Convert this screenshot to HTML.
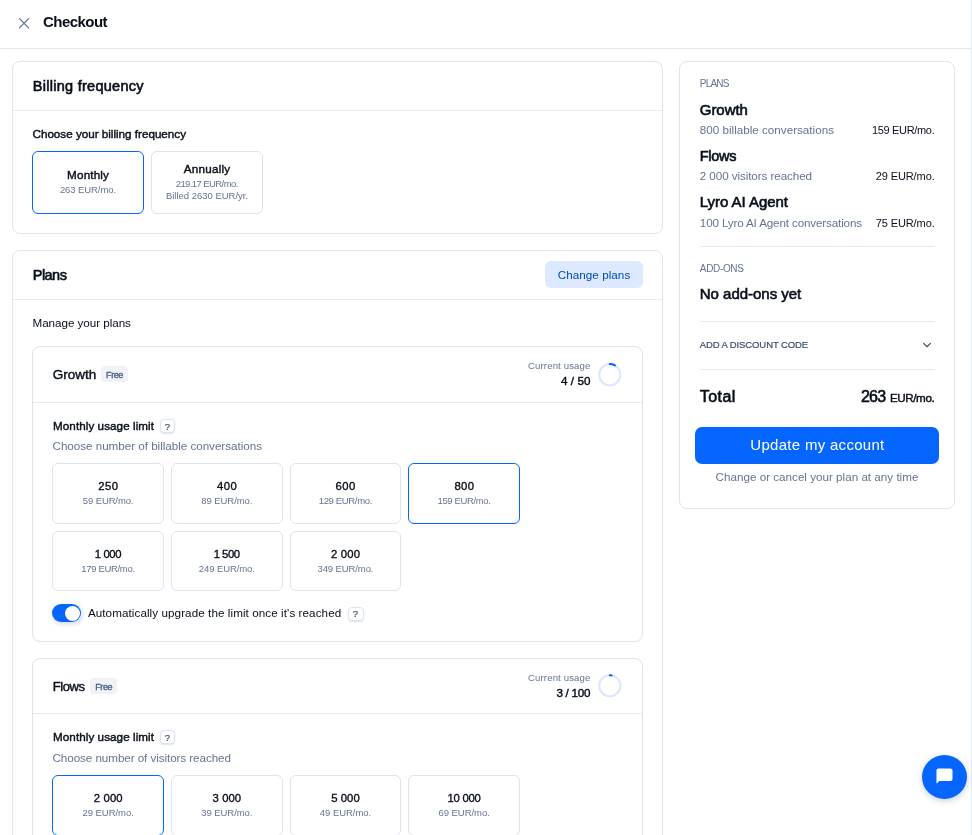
<!DOCTYPE html>
<html lang="en">
<head>
<meta charset="utf-8">
<title>Checkout</title>
<style>
*{box-sizing:border-box;margin:0;padding:0}
html,body{width:972px;height:835px;overflow:hidden;background:#fff}
body{will-change:transform;font-family:"Liberation Sans",sans-serif;color:#080f1a;position:relative}
.a{position:absolute}
.t{position:absolute;white-space:pre;display:block}
.b{font-weight:700}
.m{font-weight:400;-webkit-text-stroke:0.42px currentColor}
.h{font-weight:400;-webkit-text-stroke:0.6px currentColor}
.r{font-weight:400}
.m3{font-weight:400;-webkit-text-stroke:0.35px currentColor}
.m2{font-weight:400;-webkit-text-stroke:0.2px currentColor}
.hdr{position:absolute;left:0;top:0;width:971px;height:49px;border-bottom:1px solid #e2e8ef}
.edge{position:absolute;left:971px;top:0;width:1px;height:835px;background:#e2e8ef}
.card{position:absolute;border:1px solid #dde4ee;border-radius:8px;background:#fff}
.div{position:absolute;height:1px;background:#e6ebf2}
.tile{position:absolute;border:1px solid #dce3ee;border-radius:6px;background:#fff}
.tile.sel{border:1.5px solid #0566ff}
.tag{position:absolute;background:#eff2f6;border-radius:4px}
.q{position:absolute;border:1px solid #dde4ee;border-radius:4px;background:#fff;box-shadow:0 1px 1.5px rgba(0,20,51,.12)}
</style>
</head>
<body>
<div class="hdr"></div><div class="edge"></div>
<svg class="a" style="left:18px;top:16.5px" width="12" height="12" viewBox="0 0 12 12"><path d="M1.5 1.7 L10.6 10.8 M10.6 1.7 L1.5 10.8" stroke="#5b6f94" stroke-width="1.2" fill="none" stroke-linecap="round"/></svg>
<div class="card" style="left:12px;top:61px;width:651px;height:173px"></div>
<div class="div" style="left:13px;width:649px;top:110px"></div>
<div class="tile sel" style="left:32px;top:151px;width:112px;height:63px"></div>
<div class="tile" style="left:151px;top:151px;width:112px;height:63px"></div>
<div class="card" style="left:12px;top:250px;width:651px;height:620px"></div>
<div class="div" style="left:13px;width:649px;top:299px"></div>
<div class="a" style="left:545px;top:261px;width:98px;height:27px;border-radius:6px;background:#dce9ff"></div>
<div class="card" style="left:32px;top:346px;width:611px;height:296px"></div>
<div class="div" style="left:33px;width:609px;top:402px"></div>
<div class="tag" style="left:101.2px;top:366px;width:26.5px;height:16px"></div>
<div class="q" style="left:159.5px;top:418.5px;width:15.5px;height:14.5px"></div>
<svg class="a" style="left:0;top:0" width="972" height="835"><circle cx="609.8" cy="374.7" r="10.6" fill="none" stroke="#dbe7fe" stroke-width="2.1"/><path d="M609.8 364.09999999999997 A10.6 10.6 0 0 1 614.91 365.41" fill="none" stroke="#0566ff" stroke-width="2" stroke-linecap="round"/></svg>
<div class="tile" style="left:52.33px;top:463.00px;width:111.67px;height:60.5px"></div>
<div class="tile" style="left:171.00px;top:463.00px;width:111.67px;height:60.5px"></div>
<div class="tile" style="left:289.67px;top:463.00px;width:111.67px;height:60.5px"></div>
<div class="tile sel" style="left:408.34px;top:463.00px;width:111.67px;height:60.5px"></div>
<div class="tile" style="left:52.33px;top:530.70px;width:111.67px;height:60.5px"></div>
<div class="tile" style="left:171.00px;top:530.70px;width:111.67px;height:60.5px"></div>
<div class="tile" style="left:289.67px;top:530.70px;width:111.67px;height:60.5px"></div>
<div class="card" style="left:32px;top:658px;width:611px;height:296px"></div>
<div class="div" style="left:33px;width:609px;top:713px"></div>
<div class="tag" style="left:90.4px;top:678px;width:26.3px;height:16px"></div>
<div class="q" style="left:159.5px;top:729.5px;width:15.5px;height:14.5px"></div>
<svg class="a" style="left:0;top:0" width="972" height="835"><circle cx="609.8" cy="685.8000000000001" r="10.6" fill="none" stroke="#dbe7fe" stroke-width="2.1"/><path d="M609.8 675.2 A10.6 10.6 0 0 1 611.79 675.39" fill="none" stroke="#0566ff" stroke-width="2" stroke-linecap="round"/></svg>
<div class="tile sel" style="left:52.33px;top:775.00px;width:111.67px;height:60.5px"></div>
<div class="tile" style="left:171.00px;top:775.00px;width:111.67px;height:60.5px"></div>
<div class="tile" style="left:289.67px;top:775.00px;width:111.67px;height:60.5px"></div>
<div class="tile" style="left:408.34px;top:775.00px;width:111.67px;height:60.5px"></div>
<div class="a" style="left:52px;top:604px;width:29px;height:18px;border-radius:9px;background:#0566ff;box-shadow:1px 2px 5px rgba(0,40,120,.18)"><div class="a" style="right:1.5px;top:1.5px;width:15px;height:15px;border-radius:50%;background:#fff"></div></div>
<div class="q" style="left:347.5px;top:607px;width:16px;height:13.5px"></div>
<div class="card" style="left:679px;top:61px;width:276px;height:447.5px"></div>
<div class="div" style="left:699.5px;width:235.5px;top:246px"></div>
<div class="div" style="left:699.5px;width:235.5px;top:321px"></div>
<div class="div" style="left:699.5px;width:235.5px;top:369px"></div>
<svg class="a" style="left:921px;top:340px" width="12" height="10" viewBox="0 0 12 10"><path d="M2.6 3.4 L6 6.7 L9.4 3.4" stroke="#3c4f6e" stroke-width="1.2" fill="none" stroke-linecap="round" stroke-linejoin="round"/></svg>
<div class="a" style="left:695px;top:427px;width:244px;height:37px;border-radius:7px;background:#0566ff"></div>
<div class="a" style="left:922px;top:755px;width:45px;height:44px;border-radius:50%;background:#0566ff;box-shadow:0 2px 6px rgba(0,27,71,.22)"><svg class="a" style="left:13px;top:12px" width="19" height="19" viewBox="0 0 19 19"><path d="M3.5 1.5 H15.5 Q17.5 1.5 17.5 3.5 V12 Q17.5 14 15.5 14 H4.2 L1.5 16.8 V3.5 Q1.5 1.5 3.5 1.5 Z" fill="#fff"/></svg></div>
<header>
<div class="t b" style="top:12.00px;font-size:15px;line-height:20px;color:#080f1a;letter-spacing:-0.549px;left:43.00px;">Checkout</div>
</header>
<main>
<section>

<div class="t h" style="top:77.00px;font-size:14.5px;line-height:19px;color:#080f1a;letter-spacing:0.268px;left:32.80px;">Billing frequency</div>
<div class="t m" style="top:126.00px;font-size:11.67px;line-height:15px;color:#080f1a;letter-spacing:-0.003px;left:32.50px;">Choose your billing frequency</div>
<div class="t m" style="top:167.00px;font-size:11.67px;line-height:15px;color:#080f1a;letter-spacing:0.162px;left:-211.92px;width:600px;text-align:center;">Monthly</div>
<div class="t r" style="top:184.00px;font-size:9.5px;line-height:12px;color:#647491;letter-spacing:-0.083px;left:-212.04px;width:600px;text-align:center;">263 EUR/mo.</div>
<div class="t m" style="top:161.00px;font-size:11.67px;line-height:15px;color:#080f1a;letter-spacing:0.226px;left:-92.89px;width:600px;text-align:center;">Annually</div>
<div class="t r" style="top:178.00px;font-size:9.5px;line-height:12px;color:#647491;letter-spacing:-0.587px;left:-93.29px;width:600px;text-align:center;">219.17 EUR/mo.</div>
<div class="t r" style="top:190.00px;font-size:9.5px;line-height:12px;color:#647491;letter-spacing:-0.015px;left:-93.01px;width:600px;text-align:center;">Billed 2630 EUR/yr.</div>
</section>
<section>
<div class="t h" style="top:266.00px;font-size:14.5px;line-height:19px;color:#080f1a;letter-spacing:-0.545px;left:32.80px;">Plans</div>
<div class="t r" style="top:267.00px;font-size:11.67px;line-height:15px;color:#0049bd;letter-spacing:0.051px;left:294.03px;width:600px;text-align:center;">Change plans</div>
<div class="t r" style="top:315.00px;font-size:11.67px;line-height:15px;color:#080f1a;letter-spacing:-0.047px;left:32.50px;">Manage your plans</div>
<div class="t m" style="top:366.00px;font-size:13.5px;line-height:18px;color:#080f1a;letter-spacing:-0.023px;left:52.80px;">Growth</div>
<div class="t m3" style="top:369.00px;font-size:9px;line-height:12px;color:#4c5f80;letter-spacing:-0.439px;left:106.10px;">Free</div>
<div class="t r" style="top:360.00px;font-size:9.6px;line-height:12px;color:#647491;letter-spacing:0.134px;right:381.47px;">Current usage</div>
<div class="t m" style="top:373.00px;font-size:11.67px;line-height:15px;color:#080f1a;letter-spacing:0.066px;right:381.53px;">4 / 50</div>
<div class="t m" style="top:418.00px;font-size:11.67px;line-height:15px;color:#080f1a;letter-spacing:0.068px;left:53.00px;">Monthly usage limit</div>
<div class="t m2" style="top:421.00px;font-size:9.5px;line-height:12px;color:#3c4f6e;left:-132.70px;width:600px;text-align:center;">?</div>
<div class="t r" style="top:438.00px;font-size:11.67px;line-height:15px;color:#647491;letter-spacing:-0.029px;left:52.50px;">Choose number of billable conversations</div>
<div class="t m3" style="top:479.00px;font-size:11.3px;line-height:15px;color:#080f1a;letter-spacing:0.470px;left:-191.60px;width:600px;text-align:center;">250</div>
<div class="t r" style="top:495.00px;font-size:9.5px;line-height:12px;color:#647491;letter-spacing:-0.117px;left:-191.90px;width:600px;text-align:center;">59 EUR/mo.</div>
<div class="t m3" style="top:479.00px;font-size:11.3px;line-height:15px;color:#080f1a;letter-spacing:0.470px;left:-72.93px;width:600px;text-align:center;">400</div>
<div class="t r" style="top:495.00px;font-size:9.5px;line-height:12px;color:#647491;letter-spacing:-0.050px;left:-73.20px;width:600px;text-align:center;">89 EUR/mo.</div>
<div class="t m3" style="top:479.00px;font-size:11.3px;line-height:15px;color:#080f1a;letter-spacing:0.470px;left:45.74px;width:600px;text-align:center;">600</div>
<div class="t r" style="top:495.00px;font-size:9.5px;line-height:12px;color:#647491;letter-spacing:-0.343px;left:45.33px;width:600px;text-align:center;">129 EUR/mo.</div>
<div class="t m3" style="top:479.00px;font-size:11.3px;line-height:15px;color:#080f1a;letter-spacing:0.370px;left:164.36px;width:600px;text-align:center;">800</div>
<div class="t r" style="top:495.00px;font-size:9.5px;line-height:12px;color:#647491;letter-spacing:-0.363px;left:163.99px;width:600px;text-align:center;">159 EUR/mo.</div>
<div class="t m3" style="top:547.00px;font-size:11.3px;line-height:15px;color:#080f1a;letter-spacing:-0.395px;left:-192.04px;width:600px;text-align:center;">1 000</div>
<div class="t r" style="top:563.00px;font-size:9.5px;line-height:12px;color:#647491;letter-spacing:-0.323px;left:-192.00px;width:600px;text-align:center;">179 EUR/mo.</div>
<div class="t m3" style="top:547.00px;font-size:11.3px;line-height:15px;color:#080f1a;letter-spacing:-0.470px;left:-73.41px;width:600px;text-align:center;">1 500</div>
<div class="t r" style="top:563.00px;font-size:9.5px;line-height:12px;color:#647491;letter-spacing:-0.103px;left:-73.22px;width:600px;text-align:center;">249 EUR/mo.</div>
<div class="t m3" style="top:547.00px;font-size:11.3px;line-height:15px;color:#080f1a;letter-spacing:0.180px;left:45.59px;width:600px;text-align:center;">2 000</div>
<div class="t r" style="top:563.00px;font-size:9.5px;line-height:12px;color:#647491;letter-spacing:-0.103px;left:45.45px;width:600px;text-align:center;">349 EUR/mo.</div>
<div class="t m" style="top:678.00px;font-size:13px;line-height:17px;color:#080f1a;letter-spacing:-0.413px;left:52.80px;">Flows</div>
<div class="t m3" style="top:681.00px;font-size:9px;line-height:12px;color:#4c5f80;letter-spacing:-0.439px;left:95.30px;">Free</div>
<div class="t r" style="top:672.00px;font-size:9.6px;line-height:12px;color:#647491;letter-spacing:0.134px;right:381.47px;">Current usage</div>
<div class="t m" style="top:685.00px;font-size:11.67px;line-height:15px;color:#080f1a;letter-spacing:-0.276px;right:381.88px;">3 / 100</div>
<div class="t m" style="top:729.00px;font-size:11.67px;line-height:15px;color:#080f1a;letter-spacing:0.068px;left:53.00px;">Monthly usage limit</div>
<div class="t m2" style="top:732.00px;font-size:9.5px;line-height:12px;color:#3c4f6e;left:-132.70px;width:600px;text-align:center;">?</div>
<div class="t r" style="top:750.00px;font-size:11.67px;line-height:15px;color:#647491;letter-spacing:-0.071px;left:52.50px;">Choose number of visitors reached</div>
<div class="t m3" style="top:791.00px;font-size:11.3px;line-height:15px;color:#080f1a;letter-spacing:0.180px;left:-191.75px;width:600px;text-align:center;">2 000</div>
<div class="t r" style="top:807.00px;font-size:9.5px;line-height:12px;color:#647491;letter-spacing:-0.050px;left:-191.87px;width:600px;text-align:center;">29 EUR/mo.</div>
<div class="t m3" style="top:791.00px;font-size:11.3px;line-height:15px;color:#080f1a;letter-spacing:0.055px;left:-73.14px;width:600px;text-align:center;">3 000</div>
<div class="t r" style="top:807.00px;font-size:9.5px;line-height:12px;color:#647491;letter-spacing:-0.050px;left:-73.20px;width:600px;text-align:center;">39 EUR/mo.</div>
<div class="t m3" style="top:791.00px;font-size:11.3px;line-height:15px;color:#080f1a;letter-spacing:0.055px;left:45.53px;width:600px;text-align:center;">5 000</div>
<div class="t r" style="top:807.00px;font-size:9.5px;line-height:12px;color:#647491;letter-spacing:-0.050px;left:45.48px;width:600px;text-align:center;">49 EUR/mo.</div>
<div class="t m3" style="top:791.00px;font-size:11.3px;line-height:15px;color:#080f1a;letter-spacing:-0.212px;left:164.06px;width:600px;text-align:center;">10 000</div>
<div class="t r" style="top:807.00px;font-size:9.5px;line-height:12px;color:#647491;letter-spacing:-0.050px;left:164.14px;width:600px;text-align:center;">69 EUR/mo.</div>
<div class="t r" style="top:605.00px;font-size:11.67px;line-height:15px;color:#080f1a;letter-spacing:0.074px;left:87.90px;">Automatically upgrade the limit once it's reached</div>
<div class="t m2" style="top:608.00px;font-size:9.5px;line-height:12px;color:#3c4f6e;left:55.50px;width:600px;text-align:center;">?</div>
</section>
</main>
<aside>
<div class="t r" style="top:77.00px;font-size:10px;line-height:13px;color:#647491;letter-spacing:-0.799px;left:699.80px;">PLANS</div>
<div class="t h" style="top:100.00px;font-size:15px;line-height:20px;color:#080f1a;letter-spacing:-0.052px;left:699.80px;">Growth</div>
<div class="t r" style="top:122.00px;font-size:11.67px;line-height:15px;color:#647491;letter-spacing:0.002px;left:699.80px;">800 billable conversations</div>
<div class="t r" style="top:123.00px;font-size:11px;line-height:14px;color:#080f1a;letter-spacing:-0.333px;right:37.63px;">159 EUR/mo.</div>
<div class="t h" style="top:147.00px;font-size:14.5px;line-height:19px;color:#080f1a;letter-spacing:-0.319px;left:699.80px;">Flows</div>
<div class="t r" style="top:168.00px;font-size:11.67px;line-height:15px;color:#647491;letter-spacing:-0.083px;left:699.80px;">2 000 visitors reached</div>
<div class="t r" style="top:169.00px;font-size:11px;line-height:14px;color:#080f1a;letter-spacing:-0.102px;right:37.40px;">29 EUR/mo.</div>
<div class="t h" style="top:192.00px;font-size:15px;line-height:20px;color:#080f1a;letter-spacing:-0.041px;left:699.80px;">Lyro AI Agent</div>
<div class="t r" style="top:215.00px;font-size:11.67px;line-height:15px;color:#647491;letter-spacing:-0.148px;left:699.80px;">100 Lyro AI Agent conversations</div>
<div class="t r" style="top:216.00px;font-size:11px;line-height:14px;color:#080f1a;letter-spacing:-0.102px;right:37.40px;">75 EUR/mo.</div>
<div class="t r" style="top:262.00px;font-size:10px;line-height:13px;color:#647491;letter-spacing:-0.337px;left:699.80px;">ADD-ONS</div>
<div class="t h" style="top:284.00px;font-size:15px;line-height:20px;color:#080f1a;letter-spacing:-0.018px;left:699.80px;">No add-ons yet</div>
<div class="t m2" style="top:339.00px;font-size:9.5px;line-height:12px;color:#3c4f6e;letter-spacing:-0.103px;left:699.80px;">ADD A DISCOUNT CODE</div>
<div class="t h" style="top:386.00px;font-size:16px;line-height:21px;color:#080f1a;letter-spacing:0.426px;left:699.80px;">Total</div>
<div class="t h" style="top:386.00px;font-size:16px;line-height:21px;color:#080f1a;letter-spacing:-0.702px;right:86.50px;">263</div>
<div class="t m" style="top:390.00px;font-size:11.67px;line-height:15px;color:#080f1a;letter-spacing:-0.414px;right:37.71px;">EUR/mo.</div>
<div class="t r" style="top:435.00px;font-size:15px;line-height:20px;color:#ffffff;letter-spacing:0.291px;left:517.45px;width:600px;text-align:center;">Update my account</div>
<div class="t r" style="top:469.00px;font-size:11.67px;line-height:15px;color:#647491;letter-spacing:-0.000px;left:517.00px;width:600px;text-align:center;">Change or cancel your plan at any time</div>
</aside>
</body>
</html>
